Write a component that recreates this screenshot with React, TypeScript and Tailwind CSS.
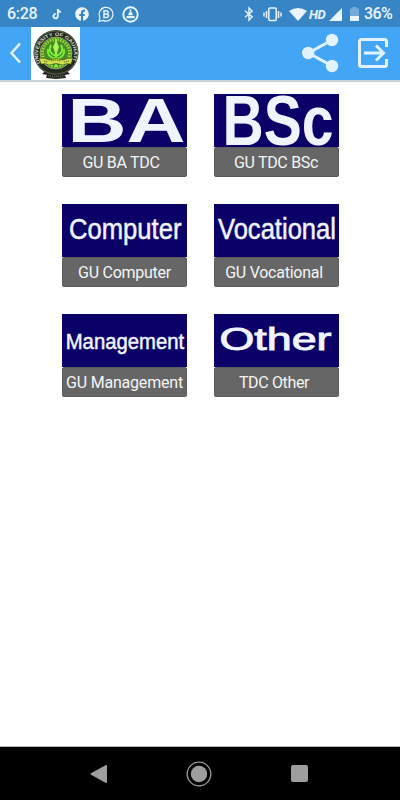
import { FaFacebook } from 'react-icons/fa';

type Course = {
  title: string;
  label: string;
  labelClass: string;
  size: number;
  x: number;
  y: number;
  width: number;
  weight: number;
  stroke: number;
};

const courses: Course[] = [
  { title: 'BA', label: 'GU BA TDC', labelClass: 'pr-[7px] tracking-[-0.3px]', size: 63, x: 5.5, y: 48.2, width: 118, weight: 700, stroke: 0 },
  { title: 'BSc', label: 'GU TDC BSc', labelClass: 'pr-[1px] tracking-[-0.3px]', size: 70, x: 8.5, y: 51, width: 111, weight: 700, stroke: 0 },
  { title: 'Computer', label: 'GU Computer', labelClass: 'tracking-[-0.25px]', size: 29, x: 7, y: 35, width: 112.5, weight: 400, stroke: 0.5 },
  { title: 'Vocational', label: 'GU Vocational', labelClass: 'pr-[5px] tracking-[-0.25px]', size: 29.5, x: 4, y: 35, width: 118, weight: 400, stroke: 0.5 },
  { title: 'Management', label: 'GU Management', labelClass: 'tracking-[-0.2px]', size: 22.5, x: 3.7, y: 35.3, width: 118.5, weight: 400, stroke: 0.5 },
  { title: 'Other', label: 'TDC Other', labelClass: 'pr-[5px] tracking-[-0.35px]', size: 30.5, x: 5.5, y: 36.3, width: 112, weight: 400, stroke: 0.9 },
];

function StatusBar() {
  return (
    <div className="flex h-[27px] items-center justify-between bg-[#3785c5] pt-px pl-[7px] pr-[7px] text-[#eaf5ff]">
      <div className="flex items-center">
        <span className="w-[31px] text-[16px] leading-none font-medium tracking-[-0.3px]">6:28</span>
        <svg className="ml-[14px] h-[12px] w-[11px]" viewBox="0 0 11 12" fill="none" stroke="currentColor" strokeWidth="1.8">
          <path d="M5.8 1v7.2A2.2 2.2 0 1 1 3.7 6M5.8 1.2c.3 1.8 1.5 2.8 3.2 3" />
        </svg>
        <FaFacebook className="ml-[12px] h-[14px] w-[14px]" />
        <svg className="ml-[9px] h-[17px] w-[16px]" viewBox="0 0 16 17" fill="none" stroke="currentColor">
          <path d="M1 15.5l1-4A6.9 6.9 0 1 1 5 14.4z" strokeWidth="1.2" />
          <path d="M6 4.8h2.5a1.6 1.6 0 0 1 0 3.3H6zM6 8.1h2.8a1.7 1.7 0 0 1 0 3.4H6z" strokeWidth="1.5" />
        </svg>
        <svg className="ml-[8px] h-[17px] w-[17px]" viewBox="0 0 17 17" fill="none" stroke="currentColor">
          <circle cx="8.5" cy="8.5" r="7.2" strokeWidth="1.9" />
          <path d="M8.5 3.5v3" strokeWidth="1.5" />
          <path d="M7 6.2h3l1 3H6zM4.5 10h8v2.3h-8z" fill="currentColor" stroke="none" />
        </svg>
      </div>
      <div className="flex items-center">
        <svg className="h-[16px] w-[10px]" viewBox="0 0 10 16" fill="none" stroke="currentColor" strokeWidth="1.4">
          <path d="M1 4.8l7.2 6.1L5 14V2l3.2 3.1L1 11.2" />
        </svg>
        <svg className="ml-[9px] h-[15px] w-[19px]" viewBox="0 0 19 15" fill="none" stroke="currentColor" strokeWidth="1.5">
          <rect x="5.8" y="1" width="7.4" height="12.5" rx="1" />
          <path d="M3.5 4v7M15.5 4v7M1 5.5v4M18 5.5v4" />
        </svg>
        <svg className="ml-[7px] h-[13px] w-[18px]" viewBox="0 0 18 13" fill="currentColor">
          <path d="M0 3Q9-2.8 18 3L9 13z" />
        </svg>
        <span className="ml-[2px] w-[17px] text-[13px] leading-none font-bold italic tracking-[-0.5px]">HD</span>
        <svg className="ml-[3px] h-[13px] w-[13px]" viewBox="0 0 13 13" fill="currentColor">
          <path d="M13 0v13H0z" />
        </svg>
        <svg className="ml-[8px] h-[14px] w-[9px]" viewBox="0 0 9 14" fill="currentColor">
          <path d="M2.5 0h4v1.5H9V9H0V1.5h2.5z" opacity=".35" />
          <path d="M0 9h9v5H0z" />
        </svg>
        <span className="ml-[5px] w-[29px] text-[16px] leading-none font-medium tracking-[-0.6px]">36%</span>
      </div>
    </div>
  );
}

function UniversityLogo() {
  return (
    <svg className="h-[53px] w-[49px] bg-white" viewBox="0 0 49 53">
      <defs>
        <path id="ring" d="M9.5 36A18 18 0 1 1 40.5 36" />
      </defs>
      <path d="M14 44l-3 3 5 1-1 3 10 1 10-1-1-3 5-1-3-3z" fill="#242a21" />
      <path d="M15 48q10 3 20 0" stroke="#8a9482" strokeWidth="1" strokeDasharray="1 1" fill="none" />
      <circle cx="25" cy="25.5" r="22.5" fill="#22291d" />
      <circle cx="25" cy="25.5" r="21.6" fill="none" stroke="#9aa58b" strokeWidth=".5" />
      <text className="font-['Liberation_Sans',sans-serif] font-bold" fontSize="4.8" fill="#d5dcc4">
        <textPath href="#ring" textLength="72" lengthAdjust="spacingAndGlyphs">UNIVERSITY OF GAUHATI</textPath>
      </text>
      <circle cx="25" cy="26" r="16" fill="#4a8a22" stroke="#b5c3a0" strokeWidth=".7" />
      <circle cx="25" cy="26" r="13.5" fill="none" stroke="#9ad83f" strokeWidth="3" strokeDasharray="1.5 1.2" />
      <g fill="none" stroke="#7df03a" strokeWidth="1.9">
        <path d="M25 12v28M20 18c-3 6 0 9 5 11 5-2 8-5 5-11M17 22c-1 6 3 9 8 10 5-1 9-4 8-10M19 38l6-5 6 5" />
      </g>
      <path d="M25 13l3 7-3 9-3-9z" fill="#a9f65a" />
      <path d="M8 31q8 0 10 2 7-3 14 0 3-2 10-2l-2 6q-6-1-8 1-7-3-14 0-3-2-8-1z" fill="#d3df4b" stroke="#34451c" strokeWidth=".6" />
      <path d="M13 34l4 1M20 34q5-2 10 0M33 35l5-1" stroke="#5c7a21" strokeWidth="1.2" strokeDasharray="1.3 .7" fill="none" />
    </svg>
  );
}

function Header() {
  return (
    <header className="flex h-[55px] items-start border-b-2 border-[#c8d2da] bg-[#42a5f5] text-[#e1f3ff]">
      <svg className="mt-[15px] ml-[9px] h-[22px] w-[13px]" viewBox="0 0 13 22" fill="none" stroke="currentColor" strokeWidth="2.6">
        <path d="M11 1.5L2.5 11 11 20.5" />
      </svg>
      <div className="ml-[9px]">
        <UniversityLogo />
      </div>
      <svg className="mt-[6px] ml-auto h-[40px] w-[38px]" viewBox="0 0 38 40" fill="currentColor">
        <path d="M31 7L7.5 20 31 33" fill="none" stroke="currentColor" strokeWidth="3" />
        <circle cx="31" cy="7" r="6.2" />
        <circle cx="7.2" cy="20" r="6.2" />
        <circle cx="31" cy="33" r="6.2" />
      </svg>
      <svg className="mt-[10px] mr-[11px] ml-[18px] h-[32px] w-[32px]" viewBox="0 0 32 32" fill="none" stroke="currentColor" strokeWidth="3">
        <path d="M29.5 10V4.5a2 2 0 0 0-2-2h-23a2 2 0 0 0-2 2v23a2 2 0 0 0 2 2h23a2 2 0 0 0 2-2V22" />
        <path d="M7 16h20M19 8.5l7.5 7.5-7.5 7.5" />
      </svg>
    </header>
  );
}

function CourseCard({ course }: { course: Course }) {
  return (
    <div className="w-[125px]">
      <svg className="block h-[53px] w-[125px] bg-[#0b0068]" viewBox="0 0 125 53">
        <text
          className="font-['Liberation_Sans',Arial,sans-serif]"
          x={course.x}
          y={course.y}
          fontSize={course.size}
          fontWeight={course.weight}
          textLength={course.width}
          lengthAdjust="spacingAndGlyphs"
          fill="#f0f4ff"
          stroke="#f0f4ff"
          strokeWidth={course.stroke}
        >
          {course.title}
        </text>
      </svg>
      <div className="h-[30px] rounded-[2px] border border-[#5b5b5b] bg-[#666] pt-[3px] text-[#f5f5f5]">
        <div className={`text-center text-[16px] leading-[24px] whitespace-nowrap ${course.labelClass}`}>
          {course.label}
        </div>
      </div>
    </div>
  );
}

function NavBar() {
  return (
    <nav className="flex h-[54px] items-center justify-between border-t border-[#bbb] bg-black pr-[92px] pl-[90px] text-[#9e9e9e]">
      <svg className="h-[20px] w-[17px]" viewBox="0 0 17 20" fill="currentColor">
        <path d="M15.5 1.2Q17 .5 17 2v16q0 1.5-1.5.8L1 10.7q-1.2-.7 0-1.4z" />
      </svg>
      <svg className="h-[26px] w-[26px]" viewBox="0 0 26 26">
        <circle cx="13" cy="13" r="11.8" fill="none" stroke="currentColor" strokeWidth="1.3" />
        <circle cx="13" cy="13" r="8.2" fill="currentColor" />
      </svg>
      <div className="h-[17px] w-[17px] rounded-[2px] bg-[#9e9e9e]" />
    </nav>
  );
}

export default function App() {
  return (
    <div className="flex h-[800px] w-[400px] flex-col overflow-hidden bg-white font-[Roboto,sans-serif]">
      <StatusBar />
      <Header />
      <main className="flex-1 pt-[12px] pl-[62px]">
        <div className="grid w-[277px] grid-cols-2 gap-x-[27px] gap-y-[27px]">
          {courses.map(course => (
            <CourseCard key={course.title} course={course} />
          ))}
        </div>
      </main>
      <NavBar />
    </div>
  );
}
